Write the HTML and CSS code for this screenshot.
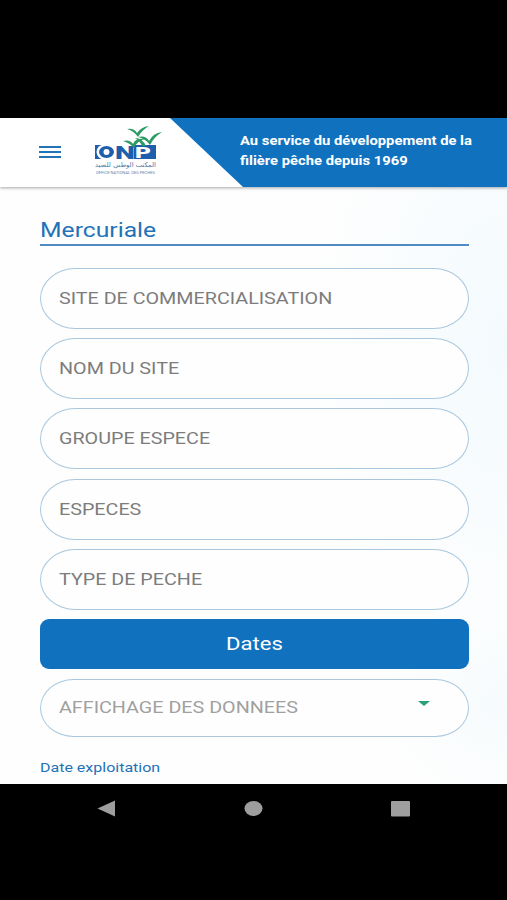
FILE: index.html
```html
<!DOCTYPE html>
<html lang="fr">
<head>
  <meta charset="UTF-8">
  <meta name="viewport" content="width=device-width, initial-scale=1.0">
  <title>ONP - Mercuriale</title>
  <link rel="stylesheet" href="styles.css">
</head>
<body>

  <div class="screen">
    <header class="header">
      <button class="menu" aria-label="Menu">
        <span></span>
        <span></span>
        <span></span>
      </button>

      <svg class="logo" width="68" height="52" viewBox="0 0 68 52">
        <!-- blue block with the round O cut out -->
        <rect x="3" y="22" width="8" height="14" fill="#1d5fae"/>
        <ellipse cx="14" cy="29" rx="9.5" ry="8" fill="#fff"/>
        <ellipse cx="14.5" cy="29" rx="7.5" ry="6" fill="#1d5fae"/>
        <ellipse cx="14.5" cy="29" rx="3" ry="3" fill="#fff"/>
        <rect x="42" y="22" width="22" height="14" fill="#1d5fae"/>
        <text class="logo-n" x="23" y="36" textLength="20" lengthAdjust="spacingAndGlyphs">N</text>
        <text class="logo-p" x="43" y="34.5" textLength="16" lengthAdjust="spacingAndGlyphs">P</text>
        <!-- birds -->
        <g fill="#2c9a63">
          <path d="M35 6 Q42 5 45 10 Q49 4 57 3 Q50 7 46 14 Q42 8 35 6Z"/>
          <path d="M46 14 Q54 12 57 18 Q61 10 70 9 Q62 14 58 22 Q54 16 46 14Z"/>
          <path d="M31 18 Q38 16 41 21 Q43 15 53 16 Q45 18 42 25 Q38 20 31 18Z"/>
          <path d="M43 15 Q50 15 54 23 L50 23 Q48 18 43 15Z"/>
        </g>
        <text class="logo-arabic" x="64" y="44" textLength="61" lengthAdjust="spacingAndGlyphs" direction="rtl">المكتب الوطني للصيد</text>
        <text class="logo-sub" x="4" y="50.5" textLength="59" lengthAdjust="spacingAndGlyphs">OFFICE NATIONAL DES PECHES</text>
      </svg>

      <div class="banner">
        <p><span class="wide">Au service du développement de la</span></p>
        <p><span class="wide">filière pêche depuis 1969</span></p>
      </div>
    </header>

    <main class="content">
      <h1 class="title"><span class="wide">Mercuriale</span></h1>

      <div class="field"><span class="wide">SITE DE COMMERCIALISATION</span></div>
      <div class="field"><span class="wide">NOM DU SITE</span></div>
      <div class="field"><span class="wide">GROUPE ESPECE</span></div>
      <div class="field"><span class="wide">ESPECES</span></div>
      <div class="field"><span class="wide">TYPE DE PECHE</span></div>

      <button class="dates"><span class="wide">Dates</span></button>

      <div class="field select">
        <span class="wide">AFFICHAGE DES DONNEES</span>
        <i class="caret"></i>
      </div>

      <p class="label"><span class="wide">Date exploitation</span></p>
    </main>
  </div>

  <nav class="navbar">
    <svg width="19" height="17" viewBox="0 0 19 17"><path d="M0.5 8.5 L18 0.5 V16.5 Z"/></svg>
    <svg width="19" height="17" viewBox="0 0 19 17"><ellipse cx="9.5" cy="8.5" rx="9" ry="7.5"/></svg>
    <svg width="19" height="17" viewBox="0 0 19 17"><rect y="1" width="19" height="15.5" rx="1"/></svg>
  </nav>

</body>
</html>
```

FILE: styles.css
```css
* {
  box-sizing: border-box;
}

body {
  margin: 0;
  padding-top: 118px;
  height: 900px;
  background-color: #000;
  font-family: Roboto, "Liberation Sans", sans-serif;
  overflow: hidden;
}

p,
h1 {
  margin: 0;
}

button {
  border: none;
  padding: 0;
  font-family: inherit;
}

/* Extended letters */
.wide {
  display: inline-block;
  white-space: nowrap;
  transform: scaleX(1.16);
  transform-origin: left center;
}

.screen {
  height: 666px;
  overflow: hidden;
  background:
    radial-gradient(ellipse 200px 330px at 100% 34%, #f3fafd, transparent),
    radial-gradient(ellipse 130px 110px at 100% 88%, #f6fbfd, transparent),
    #fefefe;
}

/* Header */
.header {
  display: flex;
  height: 69px;
  background-color: #fff;
  box-shadow: 0 1px 3px rgba(0, 0, 0, 0.35);
}

.menu {
  display: flex;
  flex-direction: column;
  gap: 3px;
  width: 22px;
  margin: 28px 0 0 39px;
  background: none;
}

.menu span {
  height: 2px;
  background-color: #2272b8;
}

.logo {
  margin: 5px 0 0 31px;
  overflow: visible;
}

.logo-n,
.logo-p {
  font-size: 19px;
  font-weight: 900;
  fill: #1d5fae;
}

.logo-p {
  font-size: 15px;
  fill: #fff;
}

.logo-arabic {
  font-family: "DejaVu Sans", sans-serif;
  font-size: 6.5px;
  fill: #4c78aa;
}

.logo-sub {
  font-size: 3.5px;
  fill: #5d83ad;
}

.banner {
  flex: 1;
  margin-left: 10px;
  padding: 13px 0 0 70px;
  background-color: #1072bf;
  clip-path: polygon(0 0, 100% 0, 100% 100%, 73px 100%);
  color: #fff;
  font-size: 13px;
  font-weight: 700;
  line-height: 20px;
}

.banner .wide {
  transform: scaleX(1.137);
}

/* Form */
.content {
  padding: 30px 38px 0 40px;
}

.title {
  height: 29px;
  margin-bottom: 22px;
  border-bottom: 2px solid #4e8ac3;
  color: #2272b8;
  font-size: 21px;
  font-weight: 400;
  line-height: 26px;
}

.title .wide {
  transform: scaleX(1.175);
}

.field {
  display: flex;
  align-items: center;
  height: 61px;
  margin-bottom: 9.2px;
  padding: 0 18px 1px;
  border: 1px solid #a9c8df;
  border-radius: 36px / 31px;
  background-color: #fefefe;
  color: #7c7c7c;
  font-size: 17px;
}

.dates {
  display: block;
  width: 100%;
  height: 50px;
  margin-bottom: 10px;
  border-radius: 9px;
  background-color: #1072bf;
  color: #fff;
  font-size: 19px;
}

.dates .wide {
  transform-origin: center;
}

.select {
  justify-content: space-between;
  height: 58px;
  margin-bottom: 22px;
  padding: 0 38px 1px 18px;
  color: #a0a0a0;
}

.caret {
  margin-bottom: 8px;
  border: 6px solid transparent;
  border-top: 5px solid #26a078;
  border-bottom: none;
}

.label {
  color: #2272b8;
  font-size: 13px;
  line-height: 18px;
}

.label .wide {
  transform: scaleX(1.23);
}

/* Android buttons */
.navbar {
  display: flex;
  justify-content: space-between;
  padding: 16px 97px;
}

.navbar svg {
  fill: #9e9e9e;
}
```
